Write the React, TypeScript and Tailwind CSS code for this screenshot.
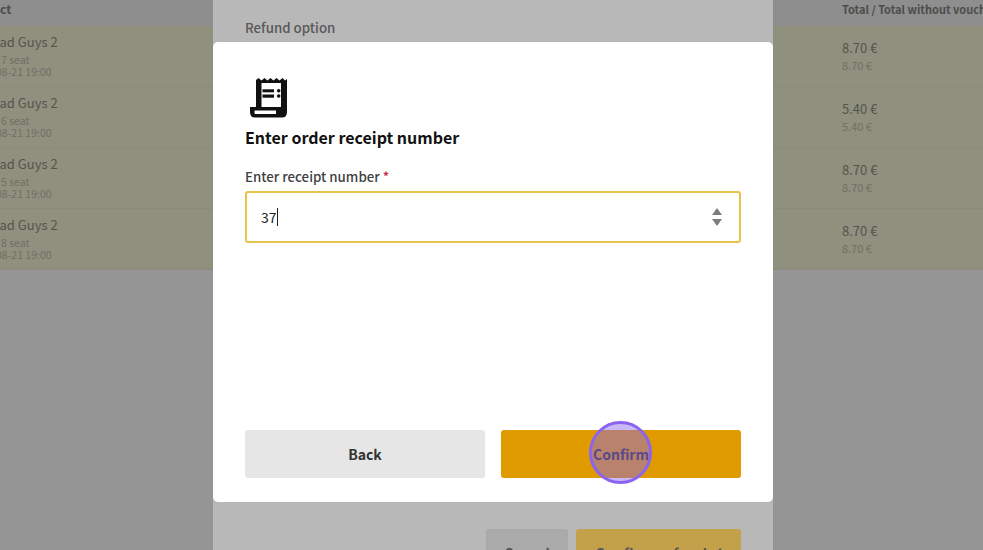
const rows = [
  { seat: '7 seat', total: '8.70 €' },
  { seat: '6 seat', total: '5.40 €' },
  { seat: '5 seat', total: '8.70 €' },
  { seat: '8 seat', total: '8.70 €' },
];

const ReceiptIcon = () => (
  <svg width="38" height="40" viewBox="0 0 38 40">
    <path
      fillRule="evenodd"
      fill="#111"
      d="M6 2 L8.5 0 L11.5 2.5 L14.5 0 L17.5 2.5 L20.5 0 L23.5 2.5 L26.5 0 L29.5 2.5 L32.5 0 L35 2.5 L37 1 V34 Q37 39.5 32 39.5 H5 Q0 39.5 0 34 V29 H6 Z M11.5 5 H31 V29 H11.5 Z M4.5 32.5 H26 V36 H5.5 Q4.5 36 4.5 35 Z"
    />
    <rect x="12.5" y="11.3" width="11.5" height="3" fill="#111" />
    <rect x="12.5" y="16.5" width="11.5" height="3.2" fill="#111" />
    <circle cx="28.7" cy="12.7" r="1.8" fill="#111" />
    <circle cx="28.7" cy="18" r="1.8" fill="#111" />
  </svg>
);

export default function App() {
  return (
    <div className="relative w-[983px] h-[550px] overflow-hidden bg-[#959595] font-['Noto_Sans_CJK_SC',sans-serif]">
      <div className="flex h-[26px] bg-[#8e8e8e] text-[11px] leading-[18px] font-bold text-[#4c4c4c] whitespace-nowrap overflow-hidden">
        <span className="w-[842px] shrink-0 text-[12px]">ct</span>
        <span>Total / Total without voucher</span>
      </div>
      {rows.map((r, i) => (
        <div key={i} className="flex h-[61px] bg-[#90907f] border-b border-[#8a8a7a] whitespace-nowrap overflow-hidden">
          <div className="w-[842px] shrink-0 pt-[7px]">
            <div className="-ml-[9px] text-[13px] leading-[18px] text-[#54544d]">Bad Guys 2</div>
            <div className="mt-[3px] ml-[1px] text-[10.5px] leading-[12px] text-[#6f6f63]">{r.seat}</div>
            <div className="-ml-[4px] text-[10.5px] leading-[12px] text-[#6f6f63]">08-21 19:00</div>
          </div>
          <div className="pt-[13px]">
            <div className="text-[13px] leading-[18px] text-[#54544d]">{r.total}</div>
            <div className="mt-[1px] text-[11px] leading-[14px] text-[#6f6f63]">{r.total}</div>
          </div>
        </div>
      ))}

      {/* refund dialog underneath */}
      <div className="absolute left-[213px] top-0 w-[560px] h-[550px] bg-[#b8b8b8] px-[32px]">
        <div className="pt-[19px] text-[13.3px] leading-[18px] font-medium text-[#595959]">Refund option</div>
        <div className="absolute left-[273px] top-[529px] flex gap-[8px]">
          <div className="w-[82px] h-[40px] rounded-[3px] bg-[#aaaaaa] pt-[14px] text-center text-[14px] font-bold text-[#555]">Cancel</div>
          <div className="w-[165px] h-[40px] rounded-[3px] bg-[#c2a14a] pt-[14px] text-center text-[14px] tracking-[0.5px] font-bold text-[#555]">Confirm refund ✓</div>
        </div>
      </div>

      {/* receipt number dialog */}
      <div className="absolute left-[213px] top-[42px] w-[560px] h-[460px] bg-white rounded-[5px] px-[32px] flex flex-col">
        <div className="pt-[36px] pl-[5px] h-[76px]">
          <ReceiptIcon />
        </div>
        <h2 className="mt-[8px] text-[16px] leading-[22px] font-bold text-[#111]">Enter order receipt number</h2>
        <label className="mt-[20px] text-[13.3px] leading-[18px] font-medium text-[#3f3f3f]">
          Enter receipt number <span className="text-[#c8203f]">*</span>
        </label>
        <div className="mt-[5px] h-[52px] flex items-center justify-between border-2 border-[#e9c44a] rounded-[3px] pl-[14px] pr-[17px]">
          <span className="flex items-center text-[14px] text-[#222]">
            37<span className="inline-block w-px h-[18px] bg-[#222]" />
          </span>
          <svg width="10" height="18" viewBox="0 0 10 18">
            <path d="M5 0 L10 7 H0 Z" fill="#7d7d7d" />
            <path d="M0 11 H10 L5 18 Z" fill="#7d7d7d" />
          </svg>
        </div>
        <div className="mt-auto mb-[24px] flex gap-[16px]">
          <button className="flex-1 h-[48px] rounded-[3px] bg-[#e6e6e6] text-[14px] font-bold text-[#333]">Back</button>
          <button className="flex-1 h-[48px] rounded-[3px] bg-[#e09b00] text-[14px] font-bold text-[#333]">Confirm</button>
        </div>
      </div>

      {/* click highlight */}
      <div className="absolute left-[589px] top-[421px] w-[63px] h-[63px] rounded-full border-[3px] border-[#8a63f0] bg-[#8a63f0]/45" />
    </div>
  );
}
